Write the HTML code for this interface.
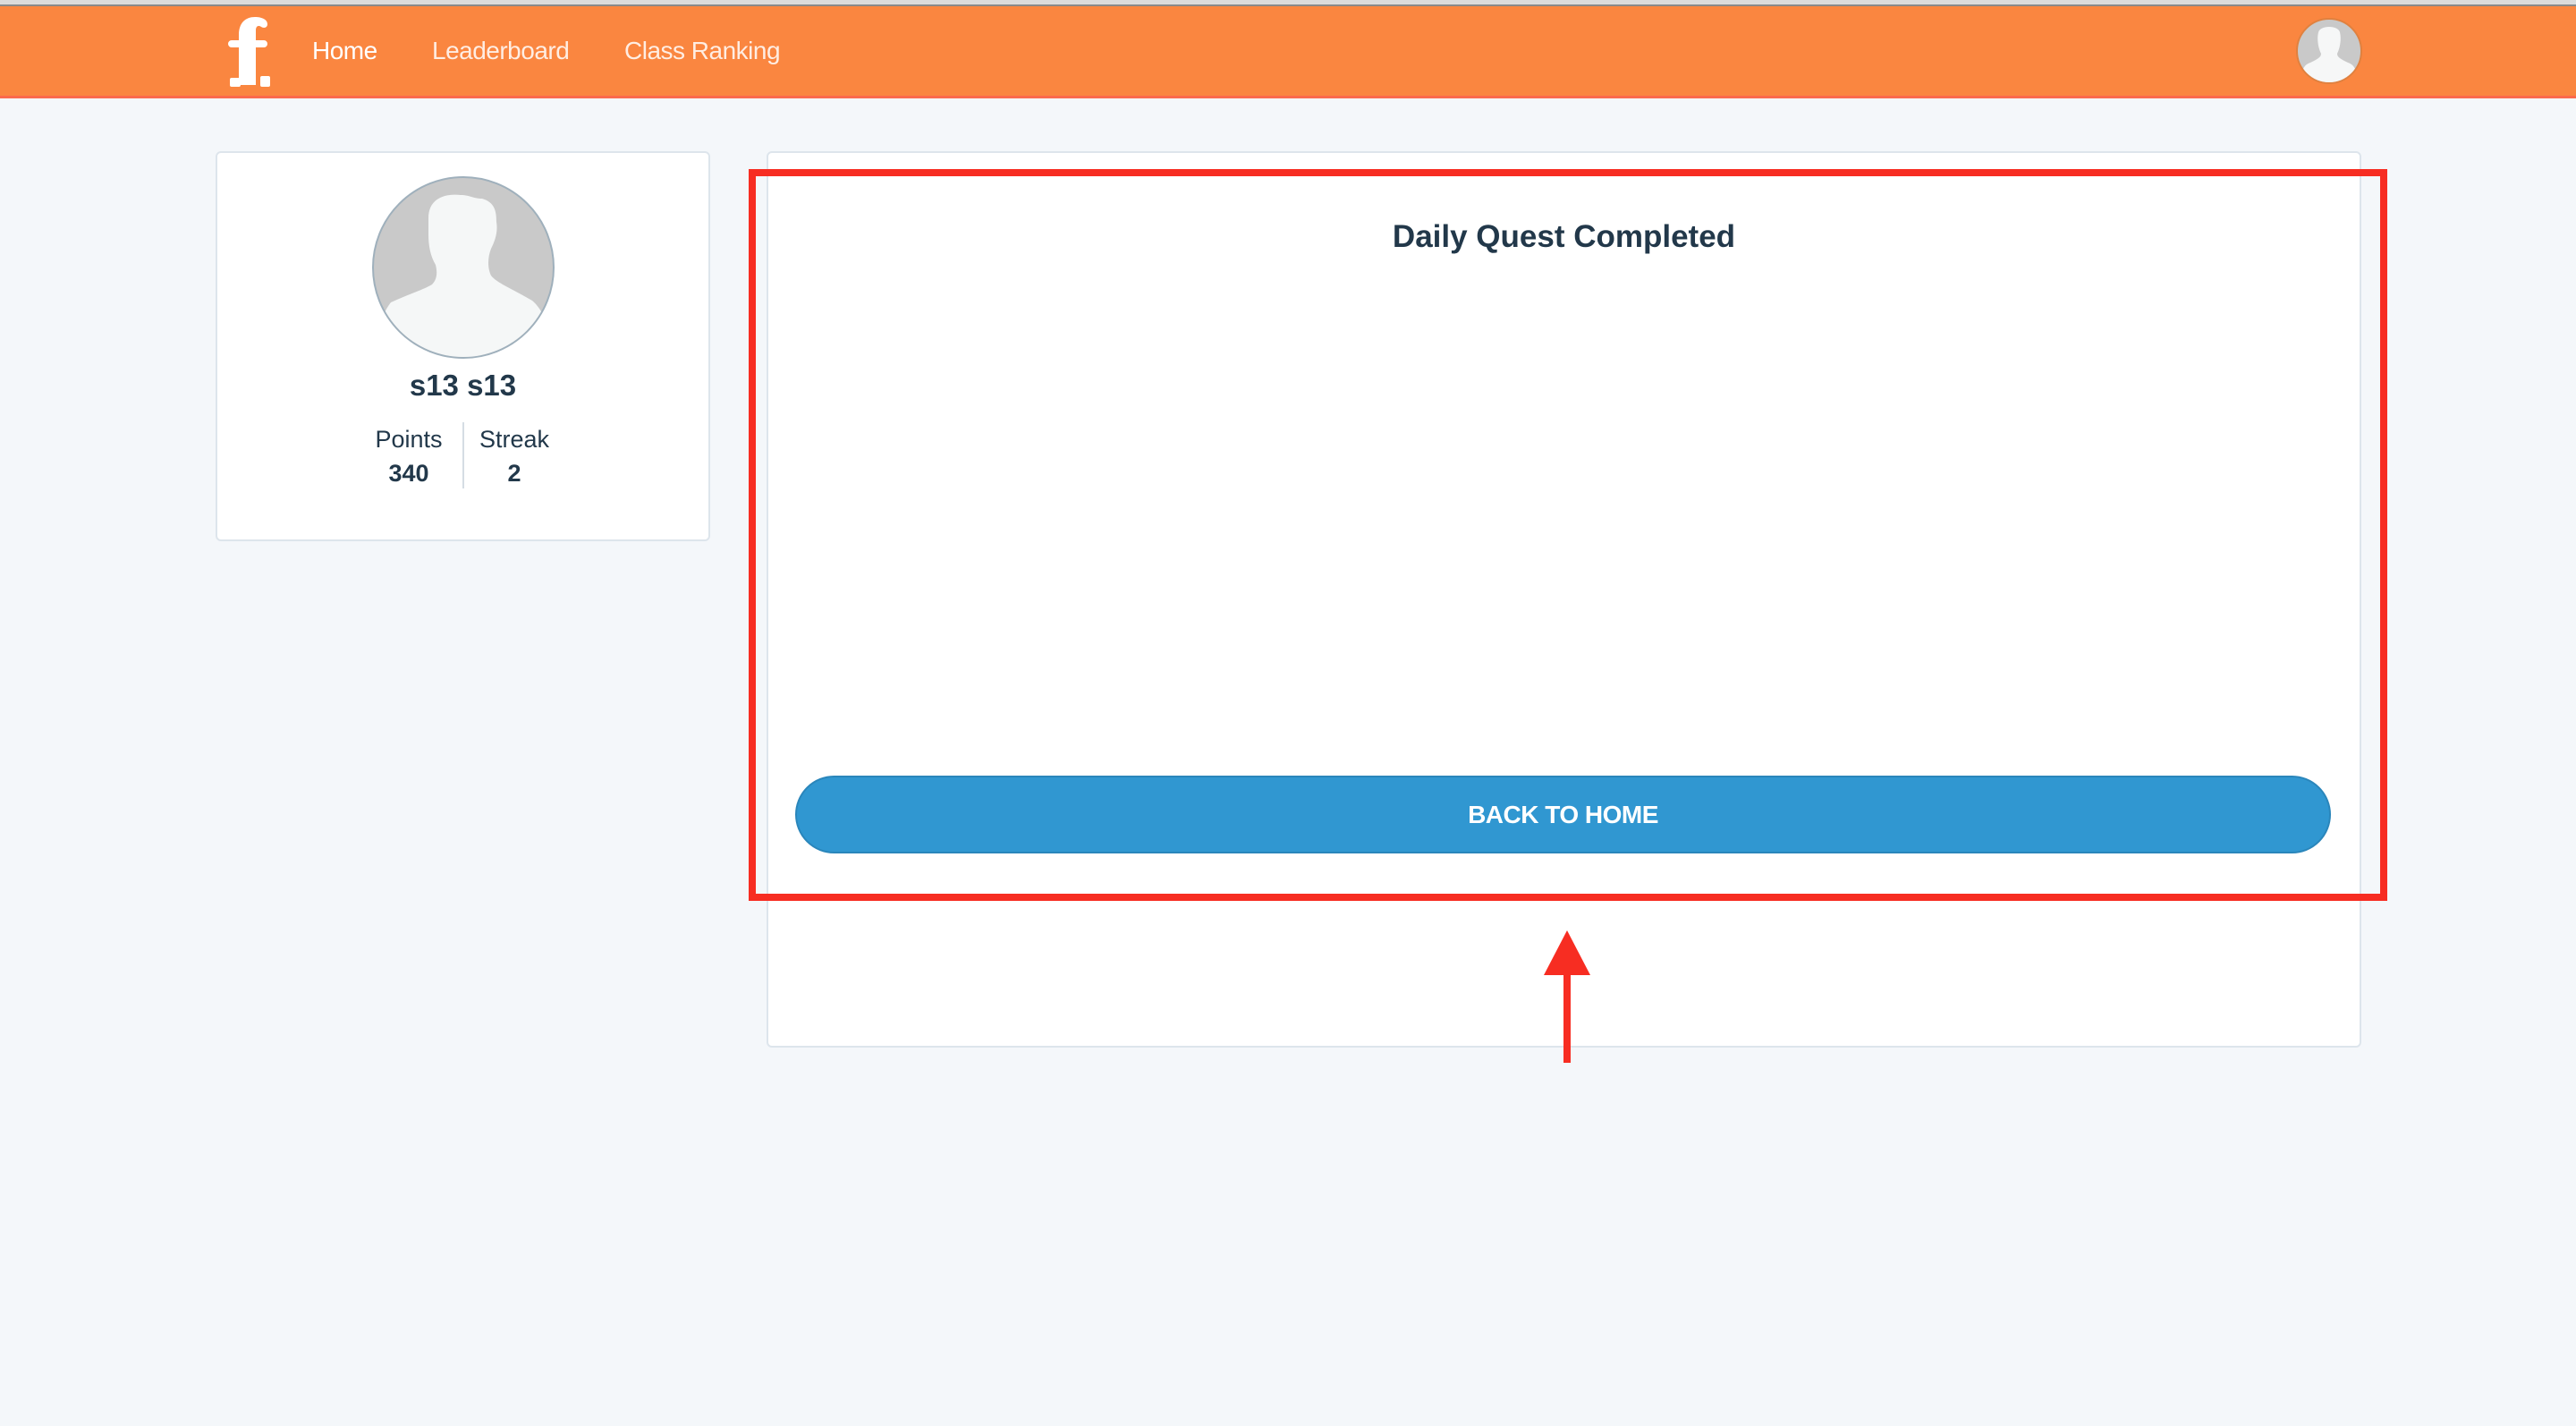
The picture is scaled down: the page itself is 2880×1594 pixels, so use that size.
<!DOCTYPE html>
<html><head><meta charset="utf-8"><style>
*{margin:0;padding:0;box-sizing:border-box}
html,body{width:2880px;height:1594px;overflow:hidden;background:#f4f7fa;font-family:"Liberation Sans",Arial,sans-serif;position:relative}
.abs{position:absolute}
.top{left:0;top:0;width:2880px;height:7px;background:#dcdcdc;border-bottom:2px solid #8a8a8a}
.nav{left:0;top:7px;width:2880px;height:103px;background:#fa8640;border-bottom:3px solid #fb6a4c}
.nav a{position:absolute;top:34px;font-size:28px;color:rgba(255,255,255,.85);text-decoration:none;letter-spacing:-0.5px}
.card{background:#fff;border:2px solid #dde5ec;border-radius:6px}
.c{color:#22384a;text-align:center}
</style></head><body>
<div class="abs top"></div>
<div class="abs nav">
  <svg class="abs" style="left:255px;top:10px" width="50" height="82" viewBox="0 0 50 82">
    <path d="M12 78 V36 H4 a3 3 0 0 1 0-8 H12 V22 C12 8 20 2 30 2 C38 2 44 5 44 10 C44 14 40 15 37 13 C34 11 31 12 31 17 V28 H40 a3 3 0 0 1 0 8 H31 V78 Z" fill="#fff"/>
    <rect x="2" y="70" width="12" height="10" rx="2" fill="#fff"/>
    <rect x="36" y="68" width="11" height="12" rx="2" fill="#fff"/>
  </svg>
  <a style="left:349px;color:#fff">Home</a>
  <a style="left:483px">Leaderboard</a>
  <a style="left:698px">Class Ranking</a>
  <svg class="abs" style="left:2567px;top:13px" width="74" height="74" viewBox="0 0 74 74">
    <defs><clipPath id="c1"><circle cx="37" cy="37" r="35"/></clipPath></defs>
    <circle cx="37" cy="37" r="36" fill="#c9c9c9" stroke="#e0813f" stroke-width="2"/>
    <g clip-path="url(#c1)" fill="#f6f7f7"><path d="M25 16 C27 8 47 8 49 16 C51 24 49 34 46 40 C46 44 50 46 58 50 C64 52 68 56 70 74 H4 C6 56 10 52 16 50 C24 46 28 44 28 40 C25 34 23 24 25 16Z"/></g>
  </svg>
</div>

<div class="abs card" style="left:241px;top:169px;width:553px;height:436px"></div>
<svg class="abs" style="left:415px;top:196px" width="206" height="206" viewBox="0 0 206 206">
  <defs><clipPath id="c2"><circle cx="103" cy="103" r="100"/></clipPath></defs>
  <circle cx="103" cy="103" r="101" fill="#c9c9c9" stroke="#9fb0bc" stroke-width="2"/>
  <g clip-path="url(#c2)" fill="#f5f7f7"><path d="M64 48 C64 26 82 20 100 22 C110 22 114 26 124 26 C138 30 140 40 140 52 C142 64 138 74 134 82 C130 92 130 104 134 112 C140 120 156 126 180 140 C192 150 200 170 210 210 H-4 C6 172 14 152 22 142 C44 132 58 128 68 122 C74 116 74 108 72 100 C66 90 64 78 64 66 Z"/></g>
</svg>
<div class="abs c" style="left:241px;top:412px;width:553px;font-size:33px;font-weight:bold">s13 s13</div>
<div class="abs c" style="left:397px;top:476px;width:120px;font-size:27px">Points</div>
<div class="abs c" style="left:397px;top:514px;width:120px;font-size:27px;font-weight:bold">340</div>
<div class="abs" style="left:517px;top:472px;width:2px;height:74px;background:#d5dde4"></div>
<div class="abs c" style="left:518px;top:476px;width:114px;font-size:27px">Streak</div>
<div class="abs c" style="left:518px;top:514px;width:114px;font-size:27px;font-weight:bold">2</div>

<div class="abs card" style="left:857px;top:169px;width:1783px;height:1002px"></div>
<div class="abs c" style="left:857px;top:245px;width:1783px;font-size:35px;font-weight:bold">Daily Quest Completed</div>
<div class="abs" style="left:889px;top:867px;width:1717px;height:87px;background:#3097d1;border:2px solid #2a86bb;border-radius:44px;color:#fff;font-weight:bold;font-size:28px;text-align:center;line-height:83px;letter-spacing:-0.5px">BACK TO HOME</div>

<div class="abs" style="left:837px;top:189px;width:1832px;height:818px;border:8px solid #f72d22"></div>
<svg class="abs" style="left:1720px;top:1036px" width="64" height="156" viewBox="0 0 64 156">
  <polygon points="32,4 6,54 58,54" fill="#f72d22"/>
  <rect x="28" y="50" width="8" height="102" fill="#f72d22"/>
</svg>
</body></html>
